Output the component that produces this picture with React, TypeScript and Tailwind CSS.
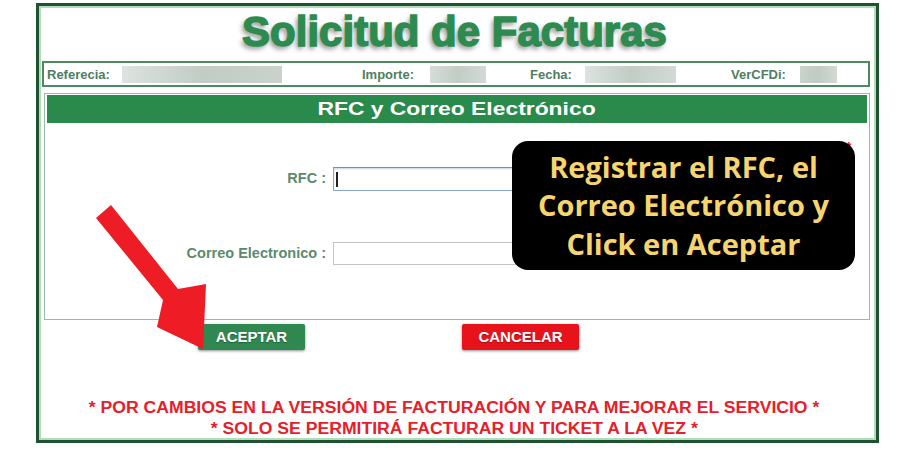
export default function App() {
  return (
    <div className="relative w-[900px] h-[450px] bg-white overflow-hidden font-['Liberation_Sans',Arial,sans-serif]">
      <div className="ml-[36px] mt-[3px] w-[843px] h-[440px] border-[3px] border-[#1f5230] shadow-[inset_0_0_0_2px_#b3dcba] flex flex-col">
        {/* Title */}
        <div className="mt-[5px] pr-[6px] text-center text-[42px] leading-[42px] font-bold text-[#2e8b4f] [-webkit-text-stroke:1.5px_#2e8b4f] [text-shadow:-2px_3px_5px_rgba(0,0,0,0.45)]">
          Solicitud de Facturas
        </div>

        {/* Info row */}
        <div className="mt-[8px] ml-[3px] mr-[6px] h-[26px] border-2 border-[#4e8a60] flex items-center text-[13px] font-bold text-[#4f7d5f] leading-none">
          <span className="ml-[3px] w-[65px]">Referecia:</span>
          <span className="ml-[10px] w-[160px] h-[17px] bg-linear-to-r from-[#dde3df] via-[#c2ccc5] to-[#c9d3cc]" />
          <span className="ml-[80px] w-[56px]">Importe:</span>
          <span className="ml-[12px] w-[56px] h-[17px] bg-linear-to-r from-[#d6ddd8] via-[#c2ccc5] to-[#d3dad5]" />
          <span className="ml-[44px] w-[43px]">Fecha:</span>
          <span className="ml-[12px] w-[91px] h-[17px] bg-linear-to-r from-[#dde3df] via-[#c2ccc5] to-[#d3dad5]" />
          <span className="ml-[55px] w-[59px]">VerCFDi:</span>
          <span className="ml-[10px] w-[37px] h-[17px] bg-linear-to-r from-[#c9d2cc] via-[#c0cbc3] to-[#d3dad5]" />
        </div>

        {/* Panel */}
        <div className="mt-[6px] ml-[5px] mr-[6px] h-[227px] border border-[#9bb9a4] pt-[1px] px-[2px] flex flex-col">
          <div className="h-[28px] bg-[#2a8a4c] flex items-center justify-center">
            <span className="inline-block scale-x-[1.27] text-white font-bold text-[18px] leading-none">
              RFC y Correo Electrónico
            </span>
          </div>
          <div className="mt-[44px] flex items-center">
            <span className="w-[279px] text-right text-[14.5px] font-bold text-[#5b8a6d]">RFC :</span>
            <div className="ml-[7px] w-[275px] h-[24px] border border-[#8aa6cc] border-t-[#6f8fbd] shadow-[inset_0_1px_2px_rgba(90,120,170,0.35)] bg-white flex items-center">
              <span className="ml-[2px] w-[2px] h-[15px] bg-[#222]" />
            </div>
          </div>
          <div className="mt-[51px] flex items-center">
            <span className="w-[279px] text-right text-[14.5px] font-bold text-[#5b8a6d]">Correo Electronico :</span>
            <div className="ml-[7px] w-[275px] h-[23px] border border-[#c4c4c4] bg-white" />
          </div>
        </div>

        {/* Buttons */}
        <div className="mt-[4px] flex">
          <div className="ml-[159px] w-[107px] h-[26px] rounded-[2px] bg-[#2e8850] shadow-[0_1px_3px_rgba(0,0,0,0.45)] flex items-center justify-center text-white font-bold text-[15px] [text-shadow:0_1px_1px_rgba(0,0,0,0.3)]">
            ACEPTAR
          </div>
          <div className="ml-[157px] w-[117px] h-[26px] rounded-[2px] bg-[#e8121a] shadow-[0_1px_3px_rgba(0,0,0,0.45)] flex items-center justify-center text-white font-bold text-[15px] [text-shadow:0_1px_1px_rgba(0,0,0,0.3)]">
            CANCELAR
          </div>
        </div>

        {/* Notes */}
        <div className="mt-[47px] pr-[6px] flex flex-col items-center text-[#e5202a] font-bold text-[16px] leading-[21px]">
          <span className="inline-block scale-x-[1.1]">* POR CAMBIOS EN LA VERSIÓN DE FACTURACIÓN Y PARA MEJORAR EL SERVICIO *</span>
          <span className="inline-block scale-x-[1.1]">* SOLO SE PERMITIRÁ FACTURAR UN TICKET A LA VEZ *</span>
        </div>
      </div>

      {/* red mark under callout corner */}
      <span className="absolute left-[846px] top-[140px] text-[#e5202a] text-[14px] font-bold leading-none">*</span>

      {/* Callout */}
      <div className="absolute left-[512px] top-[141px] w-[343px] h-[129px] rounded-[16px] bg-black flex flex-col items-center justify-center text-center text-[#f6d56f] font-['Open_Sans',sans-serif] font-bold text-[29px] leading-[38.5px]">
        <span>Registrar el RFC, el</span>
        <span>Correo Electrónico y</span>
        <span>Click en Aceptar</span>
      </div>

      {/* Arrow */}
      <svg className="absolute left-0 top-0 pointer-events-none" width="900" height="450" viewBox="0 0 900 450">
        <polygon
          points="96,218 111,205 178,289 206,284 203,349 157,327 163,300"
          fill="#ee1c24"
        />
      </svg>
    </div>
  );
}
